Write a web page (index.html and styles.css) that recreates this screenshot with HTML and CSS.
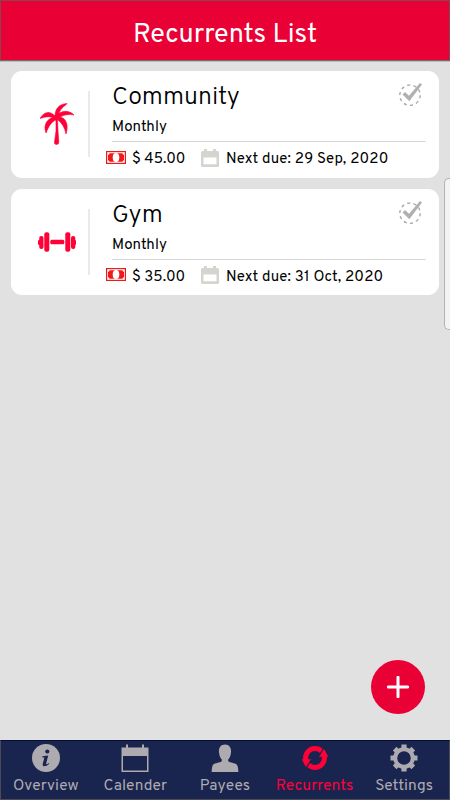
FILE: index.html
```html
<!DOCTYPE html>
<html lang="en">
<head>
    <meta charset="UTF-8">
    <meta name="viewport" content="width=device-width, initial-scale=1.0">
    <title>Recurrents List</title>
    <link rel="stylesheet" href="styles.css">
</head>
<body>

    <!-- shared icons -->
    <svg class="icon-defs" width="0" height="0">
        <symbol id="check" viewBox="0 0 26 24">
            <circle cx="12" cy="13.2" r="10.2" fill="none" stroke="#aaa" stroke-width="1.4" stroke-dasharray="3.2 3.2"/>
            <path d="M4.5 12.5L7 10L11 13.8L22 1L24 2.6L11.3 19.2Z" fill="#b0b0b0"/>
        </symbol>
        <symbol id="cash" viewBox="0 0 20 13">
            <rect width="20" height="13" fill="#f01818"/>
            <rect x="1.2" y="1.2" width="17.6" height="10.6" fill="#fff"/>
            <path d="M2 3.8Q3.5 3.8 3.5 2.2H16.5Q16.5 3.8 18 3.8V9.2Q16.5 9.2 16.5 10.8H3.5Q3.5 9.2 2 9.2Z" fill="#f01818"/>
            <ellipse cx="10" cy="6.5" rx="3.3" ry="4.5" fill="#fff"/>
        </symbol>
        <symbol id="date" viewBox="0 0 18 18">
            <path d="M1.5 2H3V0H6V2H12V0H15V2H16.5Q18 2 18 3.5V16.5Q18 18 16.5 18H1.5Q0 18 0 16.5V3.5Q0 2 1.5 2ZM2.5 8.5V15.2H15.5V8.5Z" fill="#d5d5cf" fill-rule="evenodd"/>
        </symbol>
    </svg>

    <header class="header">
        <h1>Recurrents List</h1>
    </header>

    <main class="list">
        <div class="card">
            <div class="card-icon">
                <svg width="34" height="42" viewBox="0 0 34 42" fill="#ff0037">
                    <path d="M15 13C15 6 19 1 27 0.5C25.5 3 21 4 19 10.5C24 7 30 8 34 12C29 11 25 11.5 20 14C26 15 29 22 26 31C25 25 22 20 17.5 16.5L18 28L18.8 39Q18.8 41.5 16.5 41.5T14.5 39L16 28V17C11 19 9 23 6 30C3 22 7 16 13 14.5C8 13 5 14 0 15.5C4 8.5 10 7.5 15 13Z" stroke="#ff0037" stroke-width="0.6"/>
                </svg>
            </div>
            <div class="card-body">
                <h2>Community</h2>
                <p class="period">Monthly</p>
                <div class="details">
                    <svg class="cash" width="20" height="13"><use href="#cash"/></svg>
                    <span class="amount">$ 45.00</span>
                    <svg class="date" width="18" height="18"><use href="#date"/></svg>
                    <span class="due">Next due: 29 Sep, 2020</span>
                </div>
            </div>
            <svg class="check" width="26" height="24"><use href="#check"/></svg>
        </div>

        <div class="card">
            <div class="card-icon">
                <svg width="38" height="20" viewBox="0 0 38 20" fill="#ff0037">
                    <rect x="0" y="8" width="3" height="5" rx="1"/>
                    <rect x="1.2" y="4" width="4.3" height="13" rx="2"/>
                    <rect x="6.3" y="0.3" width="5" height="19.4" rx="2"/>
                    <rect x="12.3" y="7.8" width="14" height="4.4" rx="1.5"/>
                    <rect x="27.3" y="0.3" width="5" height="19.4" rx="2"/>
                    <rect x="33" y="4" width="4.3" height="13" rx="2"/>
                    <rect x="35" y="8" width="3" height="5" rx="1"/>
                </svg>
            </div>
            <div class="card-body">
                <h2>Gym</h2>
                <p class="period">Monthly</p>
                <div class="details">
                    <svg class="cash" width="20" height="13"><use href="#cash"/></svg>
                    <span class="amount">$ 35.00</span>
                    <svg class="date" width="18" height="18"><use href="#date"/></svg>
                    <span class="due">Next due: 31 Oct, 2020</span>
                </div>
            </div>
            <svg class="check" width="26" height="24"><use href="#check"/></svg>
        </div>
    </main>

    <div class="edge-handle"></div>
    <button class="add" aria-label="Add">
        <svg width="22" height="22" viewBox="0 0 22 22"><path d="M11 1.2V20.8M1.2 11H20.8" stroke="#fff" stroke-width="3" stroke-linecap="round"/></svg>
    </button>

    <nav class="tabs">
        <a class="tab">
            <svg width="28" height="28" viewBox="0 0 28 28">
                <circle cx="14" cy="14" r="14" fill="#aeabb0"/>
                <circle cx="15.3" cy="7.5" r="2.1" fill="#19244f"/>
                <path d="M10.5 12.3L16.2 11.4L14 20.2Q14.5 20.8 17 19L17.3 19.8Q14.8 22.3 11.8 22.3Q10.3 21.8 10.8 19.8L12.4 13.4H10.3Z" fill="#19244f"/>
            </svg>
            <span>Overview</span>
        </a>
        <a class="tab">
            <svg width="28" height="28" viewBox="0 0 28 28">
                <path d="M0.5 3.5H5V0.5H7V3.5H21V0.5H23V3.5H27.5V28H0.5ZM2 12V26.5H26V12Z" fill="#aeabb0" fill-rule="evenodd"/>
            </svg>
            <span>Calender</span>
        </a>
        <a class="tab">
            <svg width="28" height="28" viewBox="0 0 28 28">
                <path d="M14 0.5C9.5 0.5 7.5 4 8 8.5C8.3 12 9.7 14.5 10.8 15.5V17C10 19 3 18.5 1.6 21.5Q0.9 23 0.6 28H27.4Q27.1 23 26.4 21.5C25 18.5 18 19 17.2 17V15.5C18.3 14.5 19.7 12 20 8.5C20.5 4 18.5 0.5 14 0.5Z" fill="#aeabb0"/>
            </svg>
            <span>Payees</span>
        </a>
        <a class="tab active">
            <svg width="28" height="28" viewBox="0 0 28 28">
                <circle cx="14" cy="14" r="9.4" fill="none" stroke="#ff0037" stroke-width="5"/>
                <path d="M0.7 15.3H10.5L5.2 23.5ZM27.300 12.700H17.500L22.800 4.500Z" fill="#ff0037"/>
                <path d="M10.600 15.500L5.400 23.500M17.400 12.500L22.600 4.500" stroke="#19244f" stroke-width="1.300"/>
            </svg>
            <span>Recurrents</span>
        </a>
        <a class="tab">
            <svg width="28" height="28" viewBox="0 0 28 28">
                <circle cx="14" cy="14" r="8.8" fill="none" stroke="#aeabb0" stroke-width="4"/>
                <path d="M14 0.5V5M14 23V27.5M0.5 14H5M23 14H27.5M4.7 4.7L7.6 7.6M20.4 20.4L23.3 23.3M4.7 23.3L7.6 20.4M20.4 7.6L23.3 4.7" stroke="#aeabb0" stroke-width="5.2"/>
            </svg>
            <span>Settings</span>
        </a>
    </nav>

</body>
</html>
```
FILE: styles.css
```css
* { box-sizing: border-box; }
body { margin: 0; height: 800px; display: flex; flex-direction: column; background-color: #e1e1e1; font-family: Overpass, Roboto, sans-serif; color: #000; overflow: hidden; }
h1, h2, p { margin: 0; font-weight: normal; white-space: nowrap; }
svg { display: block; flex: none; }
.icon-defs { position: absolute; }

.header { height: 61px; padding-top: 8px; background-color: #e90034; border: 1px solid #8b4350; border-bottom: 1px solid #7c6970; box-shadow: 0 1px 0 #b4bfc2; display: flex; align-items: center; justify-content: center; }
h1 { color: #fff; font-size: 27px; line-height: 30px; }

.list { flex: 1; padding: 10px 11px; display: flex; flex-direction: column; gap: 11px; }
.card { position: relative; display: flex; height: 106.5px; background-color: #fff; border-radius: 11px; }
.card-icon { width: 79px; height: 66px; margin-top: 20px; padding-left: 15px; border-right: 2px solid #eaeaea; display: flex; align-items: center; justify-content: center; }
.card-body { flex: 1; margin: 0 13px 0 22px; }
h2 { font-size: 25px; font-weight: 300; line-height: 28px; margin-top: 13px; letter-spacing: -0.1px; }
.period { font-size: 15px; line-height: 18px; margin-top: 7px; height: 22px; letter-spacing: 0.1px; }
.details { margin-left: -6px; height: 36px; display: flex; align-items: center; font-size: 15px; line-height: 18px; position: relative; }
.details::before { content: ""; position: absolute; left: 6px; right: 0; top: 0; height: 1px; background-color: #d8d8d8; }
.cash { margin-bottom: 4px; }
.date { margin-bottom: 3px; }
.amount { width: 69px; margin-left: 6px; padding-top: 2px; }
.due { margin-left: 7px; padding-top: 2px; white-space: nowrap; letter-spacing: 0.2px; }
.check { position: absolute; right: 15px; top: 11px; }

.edge-handle { position: absolute; right: 0; top: 178px; width: 6px; height: 152px; background-color: #f3f3f3; border: 1px solid #b3b3b3; border-right: 0; border-radius: 5px 0 0 5px; }
.add { position: absolute; right: 25px; top: 660px; width: 54px; height: 54px; padding: 0; border: 0; border-radius: 50%; background-color: #e90034; display: flex; align-items: center; justify-content: center; }

.tabs { height: 60px; display: flex; background-color: #19244f; border: 1px solid #4b4b58; border-top-color: #080d35; }
.tab { flex: 1; padding-top: 3px; display: flex; flex-direction: column; align-items: center; color: #aeabb0; font-size: 15.5px; line-height: 18px; }
.tab span { margin-top: 5px; letter-spacing: 0.1px; }
.tab.active { color: #ff0037; }
```
